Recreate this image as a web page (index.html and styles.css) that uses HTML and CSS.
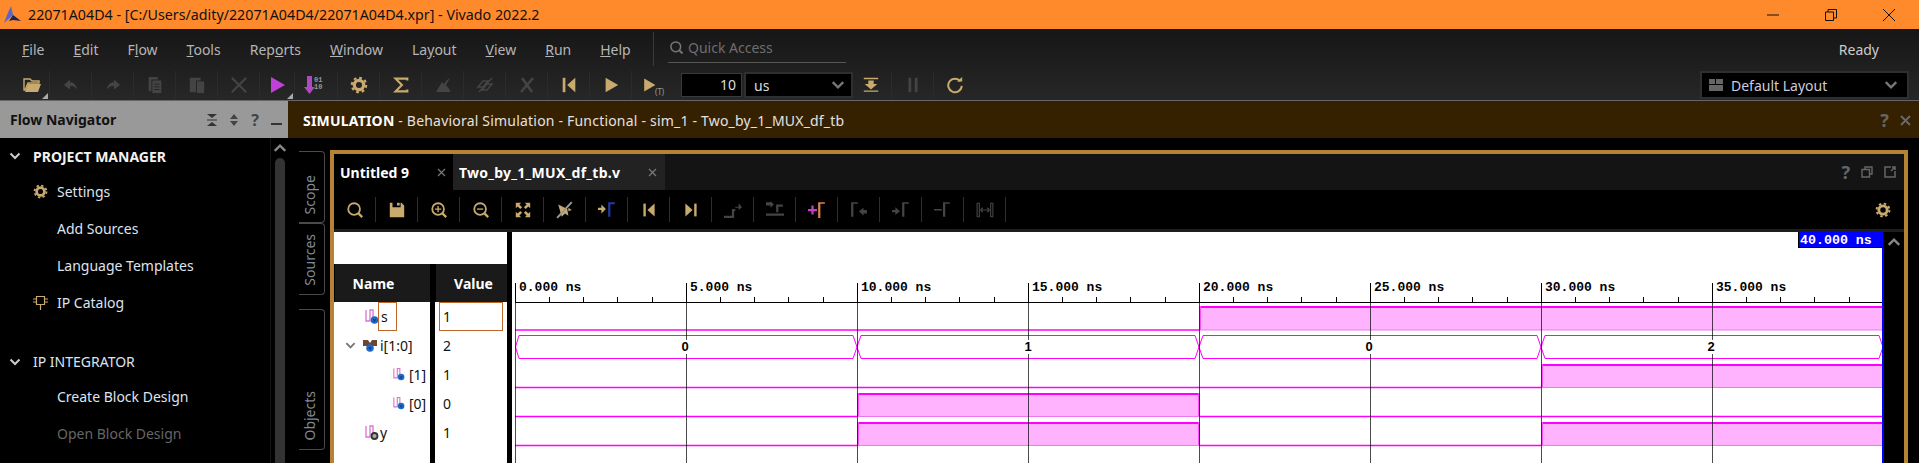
FILE: index.html
```html
<!DOCTYPE html>
<html lang="en">
<head>
  <meta charset="UTF-8">
  <meta name="viewport" content="width=device-width, initial-scale=1.0">
  <title>Vivado 2022.2</title>
  <link rel="stylesheet" href="styles.css">
</head>
<body>
  <!-- shared icons -->
  <svg class="defs" width="0" height="0">
    <symbol id="i-folder" viewBox="0 0 20 20"><path d="M2 4h6l2 2h7v2H6L3 15H2z" fill="none" stroke="currentColor" stroke-width="1.4"/><path d="M6 9h13l-3 8H3z" fill="currentColor"/></symbol>
    <symbol id="i-undo" viewBox="0 0 20 20"><path d="M9 4 2 10l7 5v-4c4 0 6 1 8 4-1-5-4-8-8-8z" fill="currentColor"/></symbol>
    <symbol id="i-redo" viewBox="0 0 20 20"><path d="M11 4l7 6-7 5v-4c-4 0-6 1-8 4 1-5 4-8 8-8z" fill="currentColor"/></symbol>
    <symbol id="i-copy" viewBox="0 0 20 20"><path d="M3 1h10v3H6v13H3z" fill="currentColor"/><path d="M7 5h10v14H7z" fill="currentColor"/><path d="M9 9h6M9 12h6M9 15h6" stroke="#222" stroke-width="1"/></symbol>
    <symbol id="i-paste" viewBox="0 0 20 20"><path d="M2 2h12v3H9v13H2z" fill="currentColor"/><path d="M10 6h8v13h-8z" fill="currentColor"/></symbol>
    <symbol id="i-x" viewBox="0 0 20 20"><path d="M2 2l16 16M18 2 2 18" stroke="currentColor" stroke-width="2.4"/></symbol>
    <symbol id="i-play" viewBox="0 0 20 20"><path d="M4 2l14 8-14 8z" fill="currentColor"/></symbol>
    <symbol id="i-gear" viewBox="0 0 20 20"><circle cx="10" cy="10" r="5.2" fill="none" stroke="currentColor" stroke-width="3.6"/><circle cx="10" cy="10" r="8" fill="none" stroke="currentColor" stroke-width="2.4" stroke-dasharray="3.1 3.18"/></symbol>
    <symbol id="i-sigma" viewBox="0 0 20 20"><path d="M17 5V3H4l7 7-7 7h13v-2" fill="none" stroke="currentColor" stroke-width="2.4"/></symbol>
    <symbol id="i-first" viewBox="0 0 20 20"><path d="M3 2h3v16H3z" fill="currentColor"/><path d="M17 2v16L8 10z" fill="currentColor"/></symbol>
    <symbol id="i-last" viewBox="0 0 20 20"><path d="M14 2h3v16h-3z" fill="currentColor"/><path d="M3 2v16l9-8z" fill="currentColor"/></symbol>
    <symbol id="i-search" viewBox="0 0 20 20"><circle cx="9" cy="9" r="6.5" fill="none" stroke="currentColor" stroke-width="2"/><path d="M13.5 13.5 18 18" stroke="currentColor" stroke-width="2.6"/></symbol>
    <symbol id="i-zoomin" viewBox="0 0 20 20"><circle cx="9" cy="9" r="6.5" fill="none" stroke="currentColor" stroke-width="2"/><path d="M13.5 13.5 18 18" stroke="currentColor" stroke-width="2.6"/><path d="M5.5 9h7M9 5.5v7" stroke="currentColor" stroke-width="1.5"/></symbol>
    <symbol id="i-zoomout" viewBox="0 0 20 20"><circle cx="9" cy="9" r="6.5" fill="none" stroke="currentColor" stroke-width="2"/><path d="M13.5 13.5 18 18" stroke="currentColor" stroke-width="2.6"/><path d="M5.5 9h7" stroke="currentColor" stroke-width="1.5"/></symbol>
    <symbol id="i-save" viewBox="0 0 20 20"><path d="M2 2h3v5h9V2h1l3 3v13H2z" fill="currentColor"/><path d="M10 2h3v3h-3z" fill="currentColor"/></symbol>
    <symbol id="i-fit" viewBox="0 0 20 20"><path d="M2 2h6L6 4l3 3-2 2-3-3-2 2zM18 2v6l-2-2-3 3-2-2 3-3-2-2zM2 18v-6l2 2 3-3 2 2-3 3 2 2zM18 18h-6l2-2-3-3 2-2 3 3 2-2z" fill="currentColor"/></symbol>
    <symbol id="i-chev" viewBox="0 0 12 12"><path d="M1.5 3.5 6 8l4.5-4.500" fill="none" stroke="currentColor" stroke-width="2"/></symbol>
    <symbol id="i-sig" viewBox="0 0 14 16"><path d="M1 1v11h4V1h3v8" fill="none" stroke="#d873cf" stroke-width="1.3"/><circle cx="9.5" cy="11" r="3.8" fill="#1c68c8"/><path d="M8.300 10l1.200 2.400L10.700 10" fill="none" stroke="#0b2a60" stroke-width=".8"/></symbol>
    <symbol id="i-sigout" viewBox="0 0 14 16"><path d="M1 1v11h4V1h3v8" fill="none" stroke="#d873cf" stroke-width="1.3"/><circle cx="9.5" cy="11" r="3" fill="#aaa" stroke="#333" stroke-width="1.8"/></symbol>
    <symbol id="i-bus" viewBox="0 0 14 16"><path d="M0 2h5l2 3 2-3h5v6H0z" fill="#6b4632"/><circle cx="7" cy="10" r="3.8" fill="#1c68c8"/><path d="M5.800 9l1.200 2.400L8.200 9" fill="none" stroke="#0b2a60" stroke-width=".8"/></symbol>
  </svg>

  <div class="app">
    <div class="titlebar">
      <svg class="logo" width="20" height="20" viewBox="0 0 20 20"><path d="M9 1l2 9-9 8 3-8z" fill="#5a66c8"/><path d="M11 10l8 6-8-1-4 1z" fill="#1b2355"/></svg>
      <span class="title-text">22071A04D4 - [C:/Users/adity/22071A04D4/22071A04D4.xpr] - Vivado 2022.2</span>
      <div class="win-btns">
        <svg width="14" height="14" viewBox="0 0 14 14"><path d="M1 7h12" stroke="#111" stroke-width="1"/></svg>
        <svg width="14" height="14" viewBox="0 0 14 14"><path d="M1.5 4h8v8.500h-8zM4 4V1.500h8.500V10H9.500" fill="none" stroke="#111"/></svg>
        <svg width="14" height="14" viewBox="0 0 14 14"><path d="M1 1l12 12M13 1 1 13" stroke="#111"/></svg>
      </div>
    </div>

    <div class="topbar">
      <div class="menu-row">
        <nav class="menu">
          <span><u>F</u>ile</span><span><u>E</u>dit</span><span>F<u>l</u>ow</span><span><u>T</u>ools</span><span>Rep<u>o</u>rts</span><span><u>W</u>indow</span><span>La<u>y</u>out</span><span><u>V</u>iew</span><span><u>R</u>un</span><span><u>H</u>elp</span>
        </nav>
        <div class="quick">
          <svg class="quick-icon" width="15" height="15"><use href="#i-search"/></svg>
          <span>Quick Access</span>
        </div>
        <span class="ready">Ready</span>
      </div>
      <div class="tool-row">
        <div class="tb tb-open"><svg class="tan" width="20" height="20"><use href="#i-folder"/></svg><i class="corner"></i></div>
        <div class="tb"><svg class="dim" width="18" height="18"><use href="#i-undo"/></svg></div>
        <div class="tb"><svg class="dim" width="18" height="18"><use href="#i-redo"/></svg></div>
        <div class="tb"><svg class="dim" width="18" height="18"><use href="#i-copy"/></svg></div>
        <div class="tb"><svg class="dim" width="18" height="18"><use href="#i-paste"/></svg></div>
        <div class="tb"><svg class="dim" width="18" height="18"><use href="#i-x"/></svg></div>
        <div class="tb tb-run"><svg class="purple" width="20" height="20"><use href="#i-play"/></svg><i class="corner"></i></div>
        <div class="tb tb-export">
          <svg width="20" height="20" viewBox="0 0 20 20"><path d="M3 1h5v11h3l-5.500 7L0 12h3z" fill="#b048c0"/><text x="10" y="7" class="bits">01</text><text x="10" y="14" class="bits">10</text></svg>
        </div>
        <div class="tb"><svg class="tan" width="18" height="18"><use href="#i-gear"/></svg></div>
        <div class="tb"><svg class="tan" width="18" height="18"><use href="#i-sigma"/></svg></div>
        <div class="tb"><svg class="dim" width="20" height="20" viewBox="0 0 20 20"><path d="M3 17h14v-2l-4-5 4-7-3 2-3 4-2-2-3 5z" fill="currentColor"/></svg></div>
        <div class="tb"><svg class="dim" width="20" height="20" viewBox="0 0 20 20"><path d="M3 12l5-6h5l-5 6zM7 15l5-6h5l-5 6zM4 17 17 3" fill="none" stroke="currentColor" stroke-width="1.5"/></svg></div>
        <div class="tb"><svg class="dim" width="20" height="20" viewBox="0 0 20 20"><path d="M5 3l10 14M16 3 4 17" stroke="currentColor" stroke-width="2.6"/></svg></div>
        <div class="tb"><svg class="tan" width="18" height="18"><use href="#i-first"/></svg></div>
        <div class="tb"><svg class="tan" width="18" height="18"><use href="#i-play"/></svg></div>
        <div class="tb tb-last tb-t"><svg class="tan" width="16" height="16"><use href="#i-play"/></svg><span class="t-mark">(T)</span></div>

        <div class="run-input">10</div>
        <div class="run-unit"><span>us</span><svg class="chev-grey" width="14" height="14"><use href="#i-chev"/></svg></div>

        <div class="tb tb-gap"><svg class="tan" width="18" height="18" viewBox="0 0 20 20"><path d="M2 2h16v1.500H2zM7 5h6v4h4l-7 6-7-6h4zM2 16h16v1.500H2z" fill="currentColor"/></svg></div>
        <div class="tb"><svg class="dim" width="18" height="18" viewBox="0 0 20 20"><path d="M5 2h3v16H5zM12 2h3v16h-3z" fill="currentColor"/></svg></div>
        <div class="tb tb-last"><svg class="tan" width="18" height="18" viewBox="0 0 20 20"><path d="M16 6a7.500 7.500 0 1 0 1.500 5" fill="none" stroke="currentColor" stroke-width="2.2"/><path d="M12 6h6V1z" fill="currentColor"/></svg></div>

        <div class="layout-pick">
          <svg width="14" height="12" viewBox="0 0 14 12"><path d="M0 0h6v5H0zM7 0h7v5H7zM0 6h14v6H0z" fill="#666"/></svg>
          <span>Default Layout</span>
          <svg class="chev-grey" width="14" height="14"><use href="#i-chev"/></svg>
        </div>
      </div>
    </div>

    <div class="main">
      <aside class="nav">
        <div class="nav-head">
          <b>Flow Navigator</b>
          <div class="nav-head-icons">
            <svg width="10" height="12" viewBox="0 0 10 12"><path d="M0 0h10L5 4zM0 12h10L5 8zM0 5.500h10v1H0z" fill="#333"/></svg>
            <svg width="10" height="12" viewBox="0 0 10 12"><path d="M5 0l4 5H1zM5 12 1 7h8z" fill="#444"/></svg>
            <span class="nav-q">?</span>
            <svg width="11" height="12" viewBox="0 0 11 12"><path d="M0 9h11v2H0z" fill="#333"/></svg>
          </div>
        </div>
        <div class="nav-body">
          <div class="nav-list">
            <div class="nav-sec nav-bold"><svg class="chev-light" width="12" height="12"><use href="#i-chev"/></svg>PROJECT MANAGER</div>
            <div class="nav-item"><svg class="tan nav-icon" width="15" height="15"><use href="#i-gear"/></svg>Settings</div>
            <div class="nav-item">Add Sources</div>
            <div class="nav-item">Language Templates</div>
            <div class="nav-item"><svg class="tan nav-icon" width="15" height="16" viewBox="0 0 15 16"><path d="M3.500 1.500h8v8h-8zM0 4h3.500M0 7h3.500M11.500 4H15M11.500 7H15M7.500 9.500V15" fill="none" stroke="currentColor" stroke-width="1.2"/></svg>IP Catalog</div>
            <div class="nav-sec nav-sec-gap"><svg class="chev-light" width="12" height="12"><use href="#i-chev"/></svg>IP INTEGRATOR</div>
            <div class="nav-item">Create Block Design</div>
            <div class="nav-item nav-off">Open Block Design</div>
          </div>
          <div class="nav-scroll">
            <svg class="chev-up" width="14" height="14"><use href="#i-chev"/></svg>
            <div class="nav-thumb"></div>
          </div>
        </div>
      </aside>

      <section class="sim">
        <div class="sim-head">
          <span><b>SIMULATION</b> - Behavioral Simulation - Functional - sim_1 - Two_by_1_MUX_df_tb</span>
          <div class="sim-head-btns">
            <span class="grey-q">?</span>
            <svg width="11" height="11" viewBox="0 0 11 11"><path d="M1 1l9 9M10 1l-9 9" stroke="#6a6a6a" stroke-width="1.8"/></svg>
          </div>
        </div>
        <div class="sim-body">
          <div class="side-tabs">
            <div class="side-tab"><span>Scope</span></div>
            <div class="side-tab"><span>Sources</span></div>
            <div class="side-tab side-tab-objects"><span>Objects</span></div>
          </div>

          <div class="frame">
            <div class="tabs">
              <div class="tab tab-on"><b>Untitled 9</b><svg width="9" height="9" viewBox="0 0 9 9"><path d="M1 1l7 7M8 1 1 8" stroke="#777" stroke-width="1.3"/></svg></div>
              <div class="tab tab-off"><b>Two_by_1_MUX_df_tb.v</b><svg width="9" height="9" viewBox="0 0 9 9"><path d="M1 1l7 7M8 1 1 8" stroke="#777" stroke-width="1.3"/></svg></div>
              <div class="tab-btns">
                <span class="grey-q">?</span>
                <svg width="12" height="12" viewBox="0 0 12 12"><path d="M4 3.500V1h7v7H8.500M1 3.500h7.500V11H1z" fill="none" stroke="#666" stroke-width="1.4"/></svg>
                <svg width="12" height="12" viewBox="0 0 12 12"><path d="M7 1H1v10h10V5M7 5l4-4M8 1h3v3" fill="none" stroke="#666" stroke-width="1.5"/></svg>
              </div>
            </div>

            <div class="wave-tools">
              <div class="wb"><svg class="tan" width="18" height="18"><use href="#i-search"/></svg></div>
              <div class="wb"><svg class="tan" width="18" height="18"><use href="#i-save"/></svg></div>
              <div class="wb"><svg class="tan" width="18" height="18"><use href="#i-zoomin"/></svg></div>
              <div class="wb"><svg class="tan" width="18" height="18"><use href="#i-zoomout"/></svg></div>
              <div class="wb"><svg class="tan" width="18" height="18"><use href="#i-fit"/></svg></div>
              <div class="wb"><svg width="18" height="18" viewBox="0 0 16 16"><path d="M2 3l8 4 1 6-3-2-3 3zM11 6l3 2-3 1" fill="#c8a96e"/><path d="M1 15 14 1" stroke="#999" stroke-width="1.8"/></svg></div>
              <div class="wb"><svg width="18" height="18" viewBox="0 0 16 16"><path d="M0 6h3V3l4 4-4 4V8H0z" fill="#c8a96e"/><path d="M9 14V1h6v1.800h-4V14z" fill="#2238a0"/></svg></div>
              <div class="wb"><svg class="tan" width="16" height="16"><use href="#i-first"/></svg></div>
              <div class="wb"><svg class="tan" width="16" height="16"><use href="#i-last"/></svg></div>
              <div class="wb"><svg class="dim" width="18" height="18" viewBox="0 0 16 16"><path d="M0 13h7V7h3v2H9v6H0zM10 5h3V2l3 3.500L13 8V6h-3z" fill="currentColor"/></svg></div>
              <div class="wb"><svg class="dim" width="18" height="18" viewBox="0 0 16 16"><path d="M0 1h4V0l3 3-3 3V4H0zM9 3h6v2h-4v5H9zM0 11h16v2H0z" fill="currentColor"/></svg></div>
              <div class="wb"><svg width="18" height="18" viewBox="0 0 16 16"><path d="M0 7h3V4h2v3h3v2H5v3H3V9H0z" fill="#c040c8"/><path d="M9 15V1h6v1.500h-4V15z" fill="#d98350"/></svg></div>
              <div class="wb"><svg class="dim" width="18" height="18" viewBox="0 0 16 16"><path d="M1 14V1h6v1.500H3V14zM8 9l4-3v2h3v3h-3v2z" fill="currentColor"/></svg></div>
              <div class="wb"><svg class="dim" width="18" height="18" viewBox="0 0 16 16"><path d="M0 8h3V5.500L7 9l-4 3.500V10H0zM9 14V1h6v1.500h-4V14z" fill="currentColor"/></svg></div>
              <div class="wb"><svg class="dim" width="18" height="18" viewBox="0 0 16 16"><path d="M0 7h7v1.500H0zM8 14V1h6v1.500h-4V14z" fill="currentColor"/></svg></div>
              <div class="wb"><svg class="dim" width="18" height="18" viewBox="0 0 16 16"><path d="M1 2h2v12H1zM13 2h2v12h-2zM4 8h8M4 8l2-2M4 8l2 2M12 8l-2-2M12 8l-2 2" fill="none" stroke="currentColor"/></svg></div>
              <svg class="tan wave-gear" width="16" height="16"><use href="#i-gear"/></svg>
            </div>

            <div class="wave-area">
              <div class="signals">
                <div class="signals-top"></div>
                <div class="signals-cols">
                  <div class="names">
                    <div class="col-head col-head-name">Name</div>
                    <div class="row"><svg class="sig-icon" width="14" height="16"><use href="#i-sig"/></svg><span class="picked picked-name">s</span></div>
                    <div class="row row-bus"><svg class="chev-grey row-chev" width="11" height="11"><use href="#i-chev"/></svg><svg class="sig-icon" width="14" height="16"><use href="#i-bus"/></svg><span class="row-label">i[1:0]</span></div>
                    <div class="row row-child"><svg class="sig-icon" width="12" height="15"><use href="#i-sig"/></svg><span class="row-label">[1]</span></div>
                    <div class="row row-child"><svg class="sig-icon" width="12" height="15"><use href="#i-sig"/></svg><span class="row-label">[0]</span></div>
                    <div class="row"><svg class="sig-icon" width="14" height="16"><use href="#i-sigout"/></svg><span class="row-label row-label-y">y</span></div>
                  </div>
                  <div class="values">
                    <div class="col-head col-head-value">Value</div>
                    <div class="val"><span class="picked picked-val">1</span></div>
                    <div class="val"><span>2</span></div>
                    <div class="val"><span>1</span></div>
                    <div class="val"><span>0</span></div>
                    <div class="val"><span>1</span></div>
                  </div>
                </div>
              </div>

              <svg class="waves" width="1372" height="231" viewBox="512 232 1372 231">
                <g class="axis-text">
                  <text x="519" y="291">0.000 ns</text>
                  <text x="690" y="291">5.000 ns</text>
                  <text x="861" y="291">10.000 ns</text>
                  <text x="1032" y="291">15.000 ns</text>
                  <text x="1203" y="291">20.000 ns</text>
                  <text x="1374" y="291">25.000 ns</text>
                  <text x="1545" y="291">30.000 ns</text>
                  <text x="1716" y="291">35.000 ns</text>
                </g>
                <path class="axis" d="M515 302.500H1884"/>
                <path class="axis" d="M549.500 297v5M583.500 297v5M617.500 297v5M652.500 297v5M720.500 297v5M754.500 297v5M788.500 297v5M823.500 297v5M891.500 297v5M925.500 297v5M959.500 297v5M994.500 297v5M1062.500 297v5M1096.500 297v5M1130.500 297v5M1165.500 297v5M1233.500 297v5M1267.500 297v5M1301.500 297v5M1336.500 297v5M1404.500 297v5M1438.500 297v5M1472.500 297v5M1507.500 297v5M1575.500 297v5M1609.500 297v5M1643.500 297v5M1678.500 297v5M1746.500 297v5M1780.500 297v5M1814.500 297v5M1849.500 297v5"/>
                <path class="axis" d="M515.500 283v19M686.500 283v19M857.500 283v19M1028.500 283v19M1199.500 283v19M1370.500 283v19M1541.500 283v19M1712.500 283v19"/>

                <!-- s -->
                <path class="low" d="M515 330H1199"/>
                <rect class="high" x="1199" y="306" width="684" height="24"/>
                <path class="high-top" d="M1199 307H1883"/>
                <path class="high-edge" d="M1200 306V330"/>
                <path class="high-bot" d="M1199 330H1883"/>

                <!-- i[1:0] -->
                <path class="bus" d="M519 335.500H853L857 347L853 358.500H519L515.500 347Z"/>
                <path class="bus" d="M861 335.500H1195L1199 347L1195 358.500H861L857 347Z"/>
                <path class="bus" d="M1203 335.500H1537L1541 347L1537 358.500H1203L1199 347Z"/>
                <path class="bus" d="M1545 335.500H1879L1883 347L1879 358.500H1545L1541 347Z"/>

                <!-- i[1] -->
                <path class="low" d="M515 387.500H1541"/>
                <rect class="high" x="1541" y="364" width="342" height="24"/>
                <path class="high-top" d="M1541 365H1883"/>
                <path class="high-edge" d="M1542 364V388"/>
                <path class="high-bot" d="M1541 387.500H1883"/>

                <!-- i[0] -->
                <path class="low" d="M515 416.500H857M1199 416.500H1883"/>
                <rect class="high" x="857" y="393" width="342" height="24"/>
                <path class="high-top" d="M857 394H1199"/>
                <path class="high-edge" d="M858 393V417M1199 393V417"/>
                <path class="high-bot" d="M857 416.500H1199"/>

                <!-- y -->
                <path class="low" d="M515 445.500H857M1199 445.500H1541"/>
                <rect class="high" x="857" y="422" width="342" height="24"/>
                <rect class="high" x="1541" y="422" width="342" height="24"/>
                <path class="high-top" d="M857 423H1199M1541 423H1883"/>
                <path class="high-edge" d="M858 422V446M1199 422V446M1542 422V446"/>
                <path class="high-bot" d="M857 445.500H1199M1541 445.500H1883"/>

                <path class="grid" d="M515.500 302V463M686.500 302V463M857.500 302V463M1028.500 302V463M1199.500 302V463M1370.500 302V463M1541.500 302V463M1712.500 302V463"/>

                <g class="bus-text">
                  <rect x="678" y="340" width="16" height="14"/>
                  <rect x="1020" y="340" width="16" height="14"/>
                  <rect x="1362" y="340" width="16" height="14"/>
                  <rect x="1703" y="340" width="16" height="14"/>
                  <text x="685" y="351">0</text>
                  <text x="1028" y="351">1</text>
                  <text x="1369" y="351">0</text>
                  <text x="1711" y="351">2</text>
                </g>

                <rect class="cursor" x="1882" y="232" width="2" height="231"/>
                <rect class="cursor-box" x="1798.500" y="231.500" width="85" height="16"/>
                <text class="cursor-text" x="1800" y="244">40.000 ns</text>
              </svg>

              <div class="wave-scroll"><svg class="chev-up" width="14" height="14"><use href="#i-chev"/></svg></div>
            </div>
          </div>
        </div>
      </section>
    </div>
  </div>
</body>
</html>
```

FILE: styles.css
```css
/* General */
html, body {
  margin: 0;
  padding: 0;
  height: 100%;
  overflow: hidden;
  background: #000;
}

body {
  font-family: "Noto Sans", "Open Sans", sans-serif;
  font-size: 14px;
}

.defs {
  position: absolute;
}

.app {
  display: flex;
  flex-direction: column;
  height: 463px;
  width: 1919px;
}

.tan { color: #c8a96e; }
.dim { color: #444; }
.purple { color: #c040d8; }
.chev-grey { color: #777; }
.chev-light { color: #ccc; }

/* Title bar */
.titlebar {
  height: 29px;
  background: #ff8a2c;
  display: flex;
  align-items: center;
  padding-left: 2px;
  color: #111;
  flex-shrink: 0;
}

.title-text {
  margin-left: 6px;
  font-size: 14.25px;
}

.win-btns {
  margin-left: auto;
  display: flex;
  gap: 44px;
  padding-right: 23px;
}

/* Menu and main toolbar */
.topbar {
  height: 71px;
  background: linear-gradient(#161616, #272727);
  border-bottom: 1px solid #666;
  flex-shrink: 0;
}

.menu-row {
  height: 37px;
  display: flex;
  align-items: center;
  color: #b5b5b5;
}

.menu {
  display: flex;
  gap: 29px;
  padding-left: 22px;
  padding-top: 3px;
  width: 631px;
}

.quick {
  border-left: 1px solid #3a3a3a;
  height: 34px;
  display: flex;
  align-items: center;
  margin-top: 3px;
  position: relative;
  padding: 0 0 4px 15px;
  color: #6e6e6e;
  width: 178px;
  box-sizing: border-box;
}

.quick::after {
  content: "";
  position: absolute;
  left: 14px;
  right: -15px;
  bottom: 3px;
  border-bottom: 1px solid #555;
}

.quick-icon {
  margin-right: 4px;
  color: #777;
}

.ready {
  margin-left: auto;
  margin-right: 40px;
  margin-top: 3px;
  color: #ccc;
}

.tool-row {
  height: 34px;
  box-sizing: border-box;
  padding: 4px 0 0 8px;
  display: flex;
  align-items: center;
}

.tb {
  width: 42px;
  height: 28px;
  box-sizing: border-box;
  display: flex;
  align-items: center;
  justify-content: center;
  border-right: 1px solid #2b2b2b;
  position: relative;
  flex-shrink: 0;
}

.tb-last {
  border-right: none;
}

.tb-open svg {
  margin-left: 6px;
}

.tb-run {
  width: 35px;
}

.tb-export {
  width: 43px;
}

.tb-export svg {
  margin-right: 5px;
}

.tb-t svg {
  margin-left: -8px;
}

.t-mark {
  position: absolute;
  left: 23px;
  bottom: 2px;
  font-size: 8px;
  color: #999;
}

.corner {
  position: absolute;
  right: 1px;
  bottom: 0;
  border-style: solid;
  border-width: 0 0 6px 6px;
  border-color: transparent transparent #aaa transparent;
}

.bits {
  font-family: "Liberation Mono", monospace;
  font-size: 7px;
  font-weight: bold;
  fill: #999;
}

.run-input {
  width: 61px;
  height: 24px;
  box-sizing: border-box;
  margin-left: 7px;
  background: #000;
  border: 1px solid #3a3a3a;
  color: #ddd;
  text-align: right;
  padding-right: 5px;
  line-height: 22px;
}

.run-unit {
  width: 109px;
  height: 26px;
  box-sizing: border-box;
  margin-left: 2px;
  background: #000;
  border: 2px solid #2f2f2f;
  color: #ddd;
  display: flex;
  align-items: center;
  justify-content: space-between;
  padding: 0 6px 0 8px;
}

.tb-gap {
  margin-left: -3px;
}

.layout-pick {
  margin-left: auto;
  margin-right: 10px;
  width: 209px;
  height: 28px;
  box-sizing: border-box;
  background: #000;
  border: 2px solid #2f2f2f;
  color: #ccd;
  display: flex;
  align-items: center;
  padding: 0 9px 0 7px;
  gap: 8px;
}

.layout-pick .chev-grey {
  margin-left: auto;
}

/* Main area */
.main {
  display: flex;
  flex: 1;
  min-height: 0;
}

/* Flow Navigator */
.nav {
  width: 288px;
  flex-shrink: 0;
  display: flex;
  flex-direction: column;
  background: #000;
}

.nav-head {
  height: 37px;
  flex-shrink: 0;
  background: #999;
  display: flex;
  align-items: center;
  justify-content: space-between;
  padding: 0 6px 0 10px;
  color: #111;
}

.nav-head-icons {
  display: flex;
  align-items: center;
  gap: 12px;
}

.nav-q {
  font-weight: bold;
  font-size: 16px;
  color: #444;
  line-height: 1;
}

.nav-body {
  flex: 1;
  display: flex;
  min-height: 0;
}

.nav-list {
  flex: 1;
  padding-top: 1px;
  color: #dde4f0;
}

.nav-sec {
  height: 34px;
  display: flex;
  align-items: center;
  padding-left: 9px;
  gap: 12px;
}

.nav-bold {
  font-weight: bold;
  color: #f2f2f2;
}

.nav-sec-gap {
  margin-top: 24px;
  height: 33px;
}

.nav-item {
  height: 37px;
  display: flex;
  align-items: center;
  padding-left: 57px;
  position: relative;
}

.nav-icon {
  position: absolute;
  left: 33px;
}

.nav-off {
  color: #666;
}

.nav-scroll {
  width: 18px;
  border-left: 1px solid #161616;
  box-sizing: border-box;
  display: flex;
  flex-direction: column;
  align-items: center;
}

.chev-up {
  color: #888;
  transform: rotate(180deg);
  margin-top: 3px;
  flex-shrink: 0;
}

.nav-thumb {
  width: 10px;
  flex: 1;
  margin-top: 3px;
  background: #333;
  border-radius: 5px 5px 0 0;
}

/* Simulation */
.sim {
  flex: 1;
  display: flex;
  flex-direction: column;
  min-width: 0;
}

.sim-head {
  height: 37px;
  flex-shrink: 0;
  background: #352000;
  display: flex;
  align-items: center;
  justify-content: space-between;
  padding: 1px 8px 0 15px;
  box-sizing: border-box;
  color: #e2e2e2;
  letter-spacing: .2px;
}

.sim-head b {
  color: #fff;
}

.sim-head-btns {
  display: flex;
  align-items: center;
  gap: 11px;
}

.grey-q {
  font-weight: bold;
  font-size: 18px;
  color: #666;
  line-height: 1;
}

.sim-body {
  flex: 1;
  display: flex;
  min-height: 0;
  overflow: hidden;
  background: #000;
}

/* Scope / Sources / Objects */
.side-tabs {
  width: 42px;
  flex-shrink: 0;
  padding-top: 13px;
  box-sizing: border-box;
}

.side-tab {
  margin-left: 11px;
  width: 26px;
  height: 72px;
  box-sizing: border-box;
  border: 1px solid #4a4a4a;
  border-left: none;
  border-radius: 0 4px 4px 0;
  display: flex;
  align-items: flex-end;
  justify-content: center;
  padding: 0 3px 8px 0;
  color: #7f8a99;
}

.side-tab span {
  writing-mode: vertical-rl;
  transform: rotate(180deg);
  line-height: 1;
}

.side-tab-objects {
  margin-top: 14px;
  height: 141px;
}

/* Gold frame */
.frame {
  width: 1578px;
  flex-shrink: 0;
  margin-top: 12px;
  border: 4px solid #b58433;
  border-bottom: none;
  box-sizing: border-box;
  display: flex;
  flex-direction: column;
  background: #000;
}

.tabs {
  height: 36px;
  flex-shrink: 0;
  background: #141414;
  display: flex;
  color: #fff;
}

.tab {
  display: flex;
  align-items: center;
  justify-content: space-between;
  box-sizing: border-box;
}

.tab-on {
  width: 119px;
  background: #000;
  padding: 0 7px 0 6px;
}

.tab-off {
  width: 212px;
  background: #222;
  padding: 0 8px 0 6px;
}

.tab-off b {
  letter-spacing: .25px;
}

.tab-btns {
  margin-left: auto;
  display: flex;
  align-items: center;
  gap: 11px;
  padding-right: 8px;
}

.wave-tools {
  height: 42px;
  flex-shrink: 0;
  box-sizing: border-box;
  border-bottom: 3px solid #1e1e1e;
  display: flex;
  align-items: center;
}

.wb {
  width: 42px;
  height: 25px;
  box-sizing: border-box;
  border-right: 1px solid #2e2e2e;
  display: flex;
  align-items: center;
  justify-content: center;
}

.wave-gear {
  margin-left: auto;
  margin-right: 13px;
}

/* Names and values */
.wave-area {
  flex: 1;
  display: flex;
  min-height: 0;
}

.signals {
  width: 173px;
  flex-shrink: 0;
  margin-right: 5px;
  display: flex;
  flex-direction: column;
  color: #111;
}

.signals-top {
  height: 32px;
  background: #fff;
  flex-shrink: 0;
}

.signals-cols {
  flex: 1;
  display: flex;
  gap: 5px;
}

.names {
  width: 96px;
  background: #fff;
  flex-shrink: 0;
}

.values {
  flex: 1;
  background: #fff;
}

.col-head {
  height: 38px;
  box-sizing: border-box;
  border-left: 1px solid #000;
  background: #1a1a1a;
  color: #fff;
  font-weight: bold;
  display: flex;
  align-items: center;
  justify-content: center;
}

.col-head-name {
  padding-right: 18px;
}

.col-head-value {
  padding-left: 4px;
}

.row {
  height: 29px;
  display: flex;
  align-items: center;
  padding-left: 31px;
  box-sizing: border-box;
}

.row-bus {
  padding-left: 11px;
}

.row-chev {
  margin-right: 7px;
}

.row-child {
  padding-left: 59px;
}

.row-child .row-label {
  margin-left: 4px;
}

.row-label {
  margin-left: 3px;
}

.row-label-y {
  margin-left: 1px;
}

.picked {
  border: 1px solid #c0682a;
  height: 29px;
  box-sizing: border-box;
  display: flex;
  align-items: center;
}

.picked-name {
  width: 19px;
  padding-left: 2px;
  margin-left: -1px;
}

.picked-val {
  width: 64px;
  margin-left: 4px;
  padding-left: 3px;
}

.val {
  height: 29px;
  display: flex;
  align-items: center;
}

.val > span:not(.picked) {
  margin-left: 8px;
}

/* Waveform */
.waves {
  flex-shrink: 0;
  background: #fff;
  display: block;
}

.axis-text text,
.cursor-text {
  font-family: "Liberation Mono", monospace;
  font-size: 13px;
  font-weight: bold;
}

.axis-text text {
  fill: #000;
}

.cursor-text {
  fill: #fff;
  font-size: 13.3px;
}

.axis {
  stroke: #000;
  stroke-width: 1;
  fill: none;
}

.low, .bus {
  stroke: #f0f;
  stroke-width: 1.5;
  fill: none;
}

.bus {
  stroke-width: 1;
}

.bus-text rect {
  fill: #fff;
}

.bus-text text {
  font-family: "Liberation Sans", sans-serif;
  font-weight: bold;
  font-size: 13px;
  text-anchor: middle;
  fill: #000;
}

.high {
  fill: #ffb3ff;
}

.high-top {
  stroke: #f0f;
  stroke-width: 2;
  fill: none;
}

.high-edge {
  stroke: #ff4dff;
  stroke-width: 2;
  fill: none;
}

.high-bot {
  stroke: #ee77ee;
  stroke-width: 1;
  fill: none;
}

.grid {
  stroke: #000;
  stroke-opacity: .7;
  stroke-width: 1;
  fill: none;
}

.cursor {
  fill: #00f;
}

.cursor-box {
  fill: #00f;
  stroke: #000;
}

.wave-scroll {
  width: 20px;
  flex-shrink: 0;
  display: flex;
  justify-content: center;
}
```
